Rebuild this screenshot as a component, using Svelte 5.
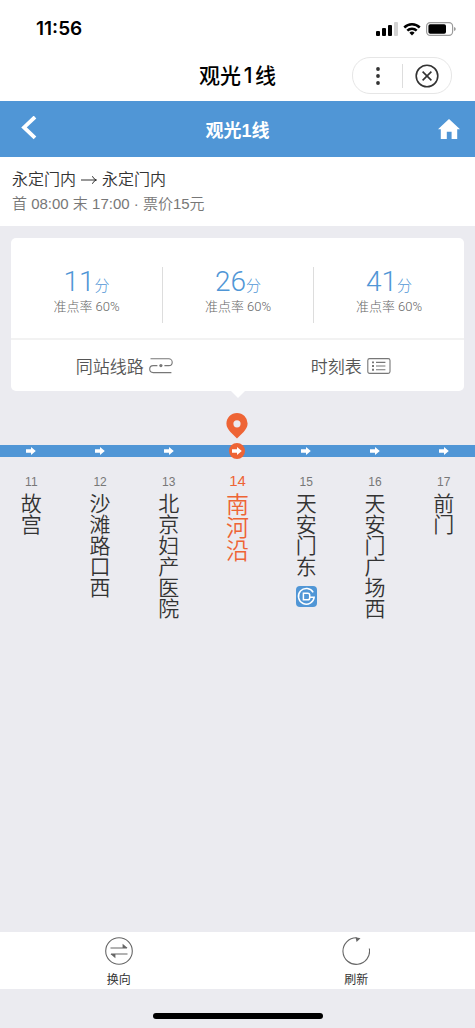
<script>
  // Live bus line view: next arrivals on top, the stop strip below it,
  // and a fixed action bar at the bottom.
  const line = '观光1线';

  const arrivals = [
    { minutes: 11, rate: '60%' },
    { minutes: 26, rate: '60%' },
    { minutes: 41, rate: '60%' }
  ];

  const stops = [
    { no: 11, name: '故宫' },
    { no: 12, name: '沙滩路口西' },
    { no: 13, name: '北京妇产医院' },
    { no: 14, name: '南河沿' },
    { no: 15, name: '天安门东', metro: true },
    { no: 16, name: '天安门广场西' },
    { no: 17, name: '前门' }
  ];

  let current = $state(14);
</script>

<div class="page">
  <header class="top">
    <div class="status">
      <span class="clock">11:56</span>
      <span class="signals">
        <svg width="22" height="14" viewBox="0 0 22 14">
          <rect x="0" y="9" width="4" height="5" rx="1" />
          <rect x="6" y="6" width="4" height="8" rx="1" />
          <rect x="12" y="3" width="4" height="11" rx="1" />
          <rect x="18" y="0" width="4" height="14" rx="1" fill="#d2d2d2" />
        </svg>
        <svg width="18" height="14" viewBox="0 0 18 14">
          <path d="M0.4 4.6a12.2 12.2 0 0 1 17.2 0l-1.7 1.8a9.8 9.8 0 0 0-13.8 0z" />
          <path d="M3.4 7.7a8 8 0 0 1 11.2 0l-1.8 1.8a5.4 5.4 0 0 0-7.6 0z" />
          <path d="M6.4 10.7a3.8 3.8 0 0 1 5.2 0L9 13.4z" />
        </svg>
        <svg width="30" height="14" viewBox="0 0 30 14">
          <rect x="0.6" y="0.6" width="26" height="12.8" rx="3.6" fill="none" stroke="#9b9b9b" stroke-width="1.2" />
          <rect x="2.4" y="2.2" width="17.6" height="9.6" rx="1.8" />
          <path d="M28 5v4q1.8-0.6 1.8-2T28 5z" fill="#9b9b9b" />
        </svg>
      </span>
    </div>
    <div class="titlebar">
      <h1>{line}</h1>
      <div class="capsule">
        <button type="button" aria-label="更多">
          <svg width="24" height="24" viewBox="0 0 24 24" fill="#333">
            <circle cx="12" cy="5" r="1.9" /><circle cx="12" cy="12" r="1.9" /><circle cx="12" cy="19" r="1.9" />
          </svg>
        </button>
        <button type="button" aria-label="关闭">
          <svg width="24" height="24" viewBox="0 0 24 24" fill="none" stroke="#333" stroke-width="1.6">
            <circle cx="12" cy="12" r="10.8" />
            <path d="M7.6 7.6l8.8 8.8M16.4 7.6l-8.8 8.8" />
          </svg>
        </button>
      </div>
    </div>
  </header>

  <nav class="nav">
    <button type="button" aria-label="返回">
      <svg width="16" height="26" viewBox="0 0 16 26" fill="none" stroke="#fff" stroke-width="3.8">
        <path d="M14 1L3 11.4l11 10.4" />
      </svg>
    </button>
    <h2>{line}</h2>
    <button type="button" aria-label="首页">
      <svg width="22" height="20" viewBox="0 0 22 20" fill="#fff">
        <path d="M11 0l11 10.2h-2.8V20h-5.6v-7.2H8.800V20H2.8v-9.8H0z" />
      </svg>
    </button>
  </nav>

  <section class="info">
    <p class="route">永定门内
      <svg width="16" height="10" viewBox="0 0 16 10" fill="none" stroke="#333" stroke-width="1">
        <path d="M0 5h15.4M11.4 1.2q1 2.8 4 3.8-3 1-4 3.8" />
      </svg>
      永定门内</p>
    <p class="hours">首 08:00 末 17:00 · 票价15元</p>
  </section>

  <main>
    <section class="card">
      <div class="arrivals">
        {#each arrivals as a}
          <div class="arrival">
            <p class="mins"><span class="num">{a.minutes}</span>分</p>
            <p class="rate">准点率 {a.rate}</p>
          </div>
        {/each}
      </div>
      <div class="links">
        <button type="button">
          同站线路
          <svg width="24" height="16" viewBox="0 0 24 16" fill="none" stroke="#777" stroke-width="1.1">
            <path d="M1.5 0.8H19.8a3.4 3.4 0 0 1 0 6.8H15.4M8.4 7.6H4.2a3.5 3.5 0 0 0 0 7H22.4" />
            <circle cx="11.9" cy="7.6" r="1.6" fill="#777" stroke="none" />
          </svg>
        </button>
        <button type="button">
          时刻表
          <svg width="24" height="16" viewBox="0 0 24 16" fill="none" stroke="#777" stroke-width="1.1">
            <rect x="0.8" y="0.6" width="22.2" height="14.8" rx="1.8" />
            <path d="M9 4.4h9.4M9 8h9.4M9 11.8h9.4" />
            <path d="M5 4.4h2M5 8h2M5 11.8h2" stroke-width="1.9" />
          </svg>
        </button>
      </div>
    </section>

    <div class="strip">
      {#each stops as s (s.no)}
        <button type="button" class="stop" class:active={s.no === current} onclick={() => (current = s.no)}>
          <span class="pin">
            {#if s.no === current}
              <svg width="22" height="26" viewBox="0 0 22 26">
                <path
                  fill="#ee6435"
                  fill-rule="evenodd"
                  d="M11 0a10.6 10.6 0 0 1 10.6 10.6c0 3.4-1.8 6-4 8.4L11 25.4 4.4 19C2.2 16.6 0.4 14 0.4 10.6A10.6 10.6 0 0 1 11 0zM11 7.2a3.6 3.6 0 1 0 0 7.2 3.6 3.6 0 0 0 0-7.2z"
                />
              </svg>
            {/if}
          </span>
          <span class="track">
            <span class="dot">
              <svg width="10" height="8" viewBox="0 0 10 8" fill="#fff">
                <path d="M0 2.3h5V0l4.8 4L5 8V5.7H0z" />
              </svg>
            </span>
          </span>
          <span class="no">{s.no}</span>
          <span class="name">{s.name}</span>
          {#if s.metro}
            <svg class="metro" width="21" height="21" viewBox="0 0 21 21" fill="none" stroke="#fff" stroke-width="1.5">
              <rect width="21" height="21" rx="4" fill="#5096d6" stroke="none" />
              <path d="M17.2 6.4A7.9 7.9 0 1 0 18.2 11.200H13.700" />
              <path d="M7.4 7.2h4.4q1.9 0 1.9 1.9v2.8q0 1.9-1.9 1.9H7.4z" />
            </svg>
          {/if}
        </button>
      {/each}
    </div>
  </main>

  <footer class="actions">
    <button type="button">
      <svg width="28" height="28" viewBox="0 0 28 28" fill="none" stroke="#666" stroke-width="1.1">
        <circle cx="14" cy="14" r="13.3" />
        <path d="M5.5 11H22M22.5 17H6" />
        <path d="M17.6 6.8L22.6 11h-5zM10.4 21.2L5.4 17h5z" fill="#666" stroke="none" />
      </svg>
      换向
    </button>
    <button type="button">
      <svg width="28" height="28" viewBox="0 0 28 28" fill="none" stroke="#666" stroke-width="1.1">
        <path d="M27.3 11.5A13.3 13.3 0 1 1 14.6 0.8" />
        <path d="M13.5 0.3l5 1L14.6 5z" fill="#666" stroke="none" />
      </svg>
      刷新
    </button>
  </footer>
  <div class="home"><span></span></div>
</div>

<style>
  :global(body) {
    margin: 0;
    background: #ebebf0;
  }
  .page {
    min-height: 100vh;
    display: flex;
    flex-direction: column;
    overflow: hidden;
    color: #333;
    background: #ebebf0;
    font-family: 'Liberation Sans', 'Noto Sans CJK SC', sans-serif;
  }
  h1,
  h2,
  p {
    margin: 0;
  }
  button {
    padding: 0;
    border: 0;
    background: none;
    color: inherit;
    font: inherit;
    cursor: pointer;
  }
  svg {
    display: block;
    flex: none;
  }

  .top {
    background: #fff;
    color: #000;
  }
  .status {
    height: 50px;
    box-sizing: border-box;
    padding: 8px 19px 0 36px;
    display: flex;
    align-items: center;
    justify-content: space-between;
  }
  .clock {
    font: 600 19px/24px Inter, sans-serif;
  }
  .signals {
    display: flex;
    gap: 5px;
  }
  .titlebar {
    height: 51px;
    box-sizing: border-box;
    padding: 0 23px;
    display: grid;
    grid-template-columns: 1fr auto 1fr;
    align-items: center;
  }
  h1 {
    grid-column: 2;
    font: 500 21px/28px Inter, 'Noto Sans CJK SC', sans-serif;
    text-autospace: normal;
  }
  .capsule {
    justify-self: end;
    width: 98px;
    height: 35px;
    display: grid;
    grid-template-columns: 1fr 1fr;
    align-items: center;
    border: 1px solid #e6e6e6;
    border-radius: 18px;
  }
  .capsule button {
    display: grid;
    place-items: center;
  }
  .capsule button + button {
    border-left: 1px solid #ddd;
  }

  .nav {
    height: 56px;
    padding: 0 15px 0 21px;
    display: grid;
    grid-template-columns: 16px 1fr 22px;
    align-items: center;
    background: #5096d6;
    color: #fff;
  }
  h2 {
    padding-top: 3px;
    font-size: 18px;
    font-weight: 700;
    line-height: 28px;
    text-align: center;
  }

  .info {
    padding: 11px 12px;
    background: #fff;
  }
  .route {
    display: flex;
    align-items: center;
    gap: 5px;
    font-size: 16px;
    font-weight: 350;
    line-height: 24px;
  }
  .hours {
    padding-top: 1px;
    font-size: 15px;
    font-weight: 350;
    line-height: 22px;
    color: #777;
  }

  main {
    flex: 1;
    padding-top: 12px;
  }
  .card {
    position: relative;
    margin: 0 11px;
    background: #fff;
    border-radius: 5px;
  }
  .card::after {
    content: '';
    position: absolute;
    top: 100%;
    left: 50%;
    margin-left: -7px;
    border: 7px solid transparent;
    border-top-color: #fff;
    border-bottom: 0;
  }
  .arrivals {
    padding: 29px 0 15px;
    display: grid;
    grid-template-columns: repeat(3, 1fr);
    border-bottom: 2px solid #f2f2f2;
  }
  .arrival {
    height: 56px;
    box-sizing: border-box;
    padding-top: 1px;
    text-align: center;
  }
  .arrival + .arrival {
    border-left: 1px solid #ddd;
  }
  .mins {
    font-size: 15px;
    font-weight: 300;
    line-height: 28px;
    color: #5096d6;
  }
  .num {
    font-family: Roboto, sans-serif;
    font-size: 28px;
  }
  .rate {
    font-family: Roboto, 'Noto Sans CJK SC', sans-serif;
    font-size: 13px;
    font-weight: 300;
    line-height: 14px;
    color: #666;
  }
  .links {
    display: grid;
    grid-template-columns: 1fr 1fr;
  }
  .links button {
    height: 51px;
    display: flex;
    align-items: center;
    justify-content: center;
    gap: 5px;
    font-family: 'Noto Sans CJK SC', sans-serif;
    font-size: 17px;
    font-weight: 350;
    line-height: 24px;
    color: #555;
  }

  .strip {
    margin: 22px -3px 0;
    display: grid;
    grid-template-columns: repeat(7, 1fr);
  }
  .stop {
    display: flex;
    flex-direction: column;
    align-items: center;
    justify-content: flex-start;
  }
  .pin {
    height: 32px;
  }
  .track {
    width: 100%;
    height: 12px;
    display: grid;
    place-items: center;
    background: #5096d6;
  }
  .dot {
    width: 16px;
    height: 16px;
    margin: -2px 0;
    display: grid;
    place-items: center;
    border-radius: 50%;
  }
  .no {
    margin-top: 14px;
    height: 22px;
    font-size: 12px;
    line-height: 22px;
    color: #777;
  }
  .name {
    writing-mode: vertical-rl;
    font-family: 'Noto Sans CJK SC', sans-serif;
    font-size: 21px;
    font-weight: 350;
    line-height: 26px;
  }
  .active .no,
  .active .name {
    color: #ee6435;
  }
  .active .no {
    font-size: 15px;
    line-height: 20px;
  }
  .active .name {
    font-size: 23px;
  }
  .active .dot {
    background: #ee6435;
  }
  .metro {
    margin-top: 9px;
  }

  .actions {
    height: 57px;
    display: grid;
    grid-template-columns: 1fr 1fr;
    background: #fff;
  }
  .actions button {
    padding-top: 5px;
    display: flex;
    flex-direction: column;
    align-items: center;
    gap: 7px;
    font-size: 12px;
    line-height: 16px;
  }
  .home {
    padding: 24px 0 9px;
  }
  .home span {
    display: block;
    width: 170px;
    height: 6px;
    margin: 0 auto;
    border-radius: 3px;
    background: #000;
  }
</style>
